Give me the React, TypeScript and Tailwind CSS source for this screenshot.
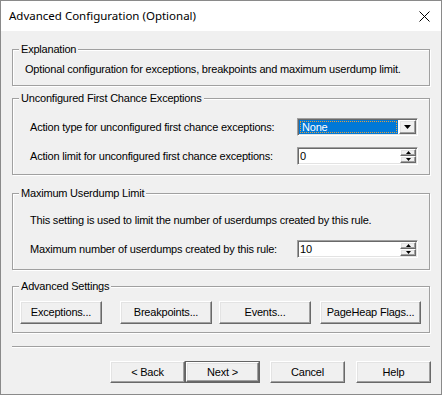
const raised =
  "border border-t-white border-l-white border-r-[#696969] border-b-[#696969] shadow-[inset_-1px_-1px_0_#a0a0a0,inset_1px_1px_0_#e3e3e3] bg-[#f0f0f0]"
const sunken =
  "border border-t-[#a0a0a0] border-l-[#a0a0a0] border-r-white border-b-white shadow-[inset_1px_1px_0_#696969,inset_-1px_-1px_0_#e3e3e3]"

const Group = ({ title, className, inner, children }: { title: string; className: string; inner: string; children: React.ReactNode }) => (
  <fieldset className={`border border-[#a0a0a0] shadow-[inset_1px_1px_0_#fff,1px_1px_0_#fff] ${className}`}>
    <legend className="ml-[6px] bg-[#f0f0f0] px-[2px] leading-[14px]">{title}</legend>
    <div className={inner}>{children}</div>
  </fieldset>
)

const Spin = ({ value }: { value: string }) => (
  <div className={`flex h-[18px] w-[121px] bg-white ${sunken}`}>
    <div className="flex-1 pl-[2px] leading-[14px] pt-[1px]">{value}</div>
    <div className="mr-[1px] mt-[1px] flex w-[16px] flex-col">
      <div className={`flex h-[7px] items-center justify-center ${raised}`}>
        <svg width="5" height="3" viewBox="0 0 5 3"><path d="M2.5 0 L5 3 L0 3 Z" fill="#000" /></svg>
      </div>
      <div className={`flex h-[7px] items-center justify-center ${raised}`}>
        <svg width="5" height="3" viewBox="0 0 5 3"><path d="M0 0 L5 0 L2.5 3 Z" fill="#000" /></svg>
      </div>
    </div>
  </div>
)

const Btn = ({ label, className = "" }: { label: string; className?: string }) => (
  <div className={`flex items-center justify-center ${raised} ${className}`}>{label}</div>
)

export default function App() {
  return (
    <div
      className="flex h-[395px] w-[442px] flex-col border border-[#8a8a8a] bg-[#f0f0f0] text-[11px] tracking-[-0.2px] text-black"
      style={{ fontFamily: '"Liberation Sans", Arial, sans-serif' }}
    >
      <div className="flex h-[30px] items-center justify-between bg-white pl-[8px] pr-[11px]">
        <span className="text-[11.5px] tracking-normal" style={{ fontFamily: '"Noto Sans", sans-serif' }}>
          Advanced Configuration (Optional)
        </span>
        <svg width="11" height="11" viewBox="0 0 11 11">
          <path d="M0.5 0.5 L10.5 10.5 M10.5 0.5 L0.5 10.5" stroke="#000" strokeWidth="1" />
        </svg>
      </div>

      <div className="flex flex-col px-[11px] pt-[11px]">
        <Group title="Explanation" className="" inner="pb-[9px] pl-[12px] pt-[7px]">
          <div className="leading-[13px]">Optional configuration for exceptions, breakpoints and maximum userdump limit.</div>
        </Group>

        <Group title="Unconfigured First Chance Exceptions" className="mt-[5px]" inner="pb-[9px] pl-[17px] pr-[11px] pt-[13px]">
          <div className="flex h-[18px] items-center justify-between">
            <span>Action type for unconfigured first chance exceptions:</span>
            <div className={`flex h-[18px] w-[121px] bg-white ${sunken}`}>
              <div className="m-[1px] flex-1 bg-[#0078d7] p-[1px]">
                <div className="h-full border border-dotted border-[#e0a040] pl-[1px] leading-[11px] text-white">None</div>
              </div>
              <div className={`my-[1px] mr-[1px] flex w-[17px] items-center justify-center ${raised}`}>
                <svg width="7" height="4" viewBox="0 0 7 4"><path d="M0 0 L7 0 L3.5 4 Z" fill="#000" /></svg>
              </div>
            </div>
          </div>
          <div className="mt-[11px] flex h-[18px] items-center justify-between">
            <span>Action limit for unconfigured first chance exceptions:</span>
            <Spin value="0" />
          </div>
        </Group>

        <Group title="Maximum Userdump Limit" className="mt-[11px]" inner="pb-[11px] pl-[17px] pr-[11px] pt-[14px]">
          <div className="leading-[13px]">This setting is used to limit the number of userdumps created by this rule.</div>
          <div className="mt-[13px] flex h-[18px] items-center justify-between">
            <span>Maximum number of userdumps created by this rule:</span>
            <Spin value="10" />
          </div>
        </Group>

        <Group title="Advanced Settings" className="mt-[9px]" inner="pb-[8px] pl-[7px] pt-[8px]">
          <div className="flex h-[23px]">
            <Btn label="Exceptions..." className="w-[82px]" />
            <Btn label="Breakpoints..." className="ml-[18px] w-[92px]" />
            <Btn label="Events..." className="ml-[7px] w-[92px]" />
            <Btn label="PageHeap Flags..." className="ml-[9px] w-[101px]" />
          </div>
        </Group>

        <div className="mt-[13px] h-[2px] border-t border-b border-t-[#a0a0a0] border-b-white" />

        <div className="-mr-[1px] mt-[13px] flex h-[22px] justify-end">
          <Btn label="< Back" className="w-[75px]" />
          <div className="flex w-[75px] border border-[#646464]">
            <Btn label="Next >" className="flex-1" />
          </div>
          <Btn label="Cancel" className="ml-[10px] w-[75px]" />
          <Btn label="Help" className="ml-[11px] w-[75px]" />
        </div>
      </div>
    </div>
  )
}
